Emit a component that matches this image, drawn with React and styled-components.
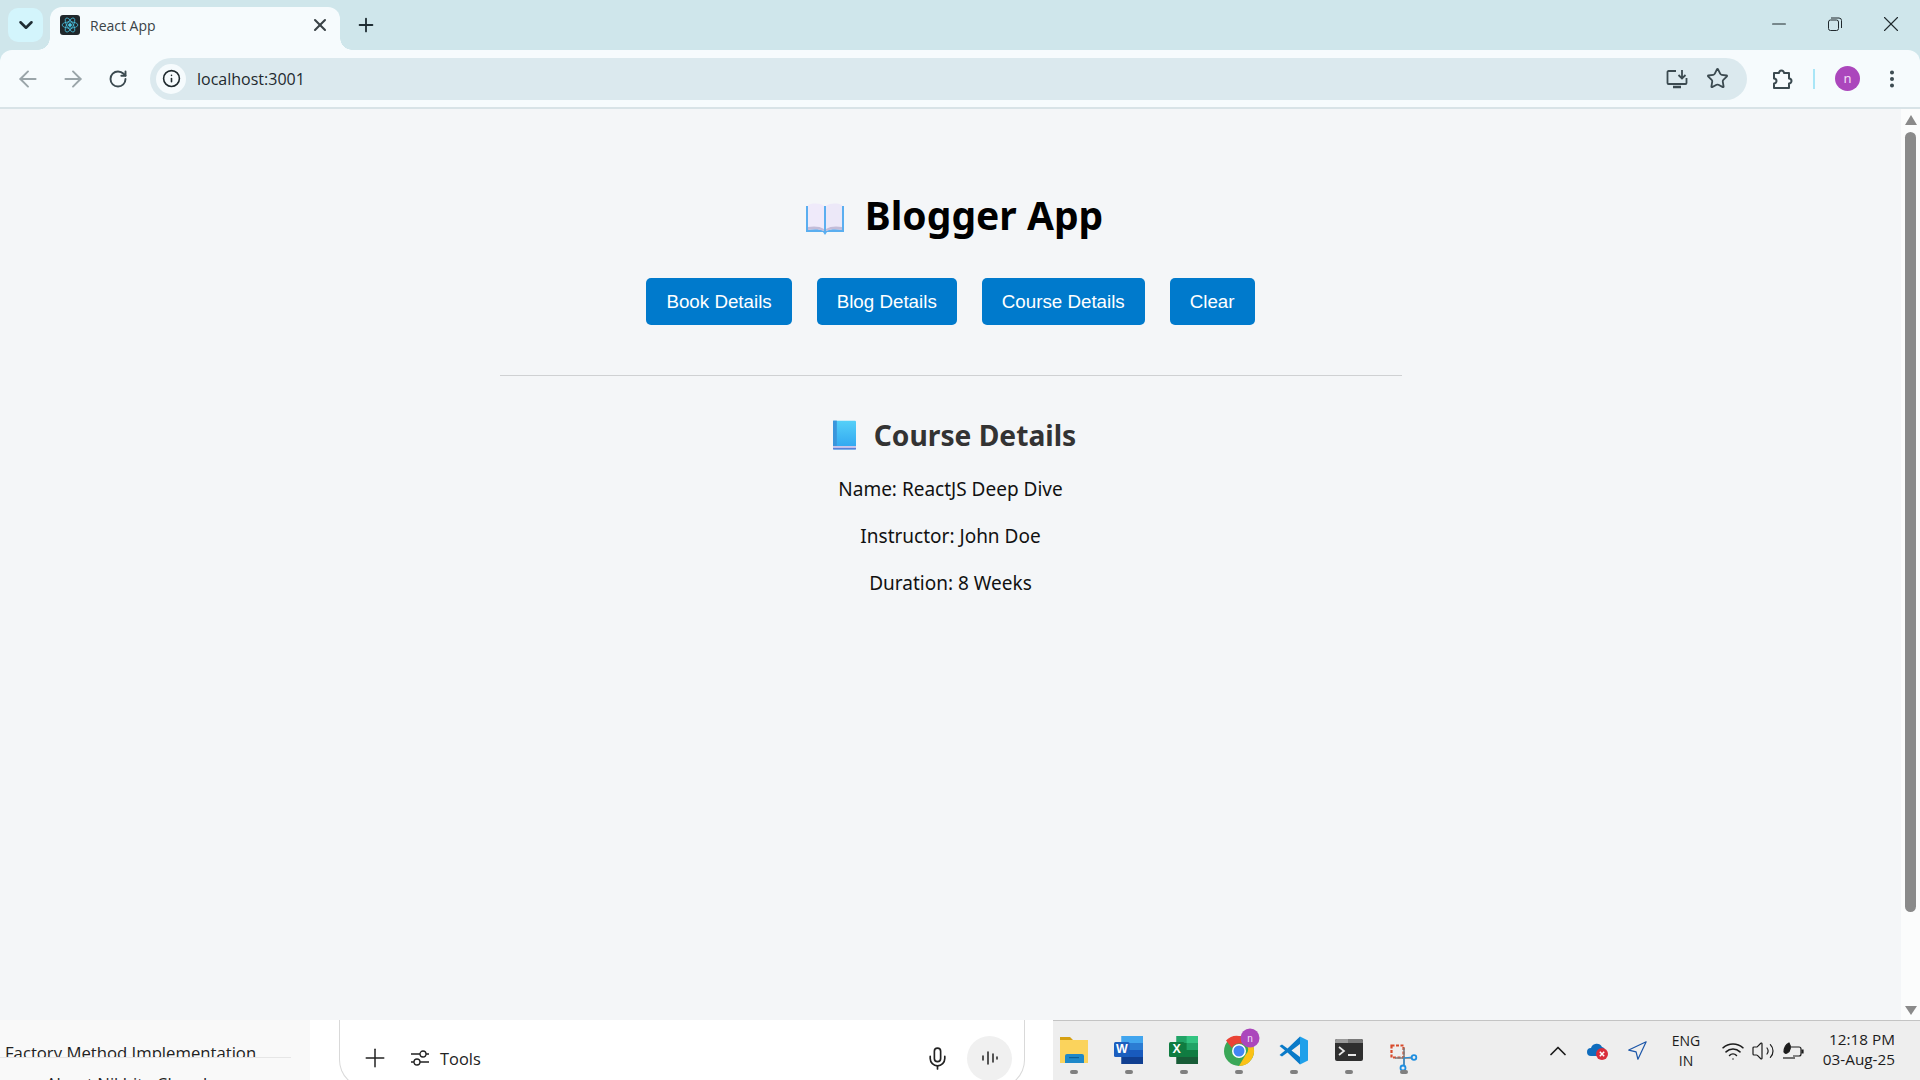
import React from "react";
import styled, { createGlobalStyle } from "styled-components";
import { ChevronDown, X, Plus, ArrowLeft, ArrowRight, RotateCw, Info, Star, EllipsisVertical, Minus, Mic, ChevronUp, Navigation, Wifi, Volume2 } from "lucide-react";

const GlobalStyle = createGlobalStyle`
  html, body { margin: 0; padding: 0; background: #f4f6f8; }
  body { font-family: "Noto Sans", "Open Sans", sans-serif; overflow: hidden; }
  * { box-sizing: border-box; }
`;

const Screen = styled.div`
  width: 1920px;
  height: 1080px;
  display: flex;
  flex-direction: column;
  overflow: hidden;
  background: #cfe6eb;
`;

const TabStrip = styled.div`
  height: 50px;
  flex: none;
  display: flex;
  align-items: flex-start;
  color: #1f2d33;
`;

const TabMenu = styled.div`
  width: 35px;
  height: 34px;
  margin: 8px 0 0 8px;
  border-radius: 10px;
  background: #d3f5fc;
  display: flex;
  align-items: center;
  justify-content: center;
`;

const Tab = styled.div`
  position: relative;
  width: 290px;
  height: 43px;
  margin: 7px 0 0 7px;
  border-radius: 12px 12px 0 0;
  background: #f6fbfd;
  display: flex;
  align-items: center;
  padding: 0 10px 7px 10px;
  font-size: 14px;
  color: #3a4347;
  font-family: "Open Sans", sans-serif;

  &::before,
  &::after {
    content: "";
    position: absolute;
    bottom: 0;
    width: 12px;
    height: 12px;
  }
  &::before {
    left: -12px;
    background: radial-gradient(circle at 0 0, transparent 11.5px, #f6fbfd 12px);
  }
  &::after {
    right: -12px;
    background: radial-gradient(circle at 100% 0, transparent 11.5px, #f6fbfd 12px);
  }
`;

const Favicon = styled.div`
  width: 20px;
  height: 20px;
  border-radius: 3px;
  background: #20272b;
  display: flex;
  align-items: center;
  justify-content: center;
  margin-right: 10px;
`;

const TabTitle = styled.span`
  flex: 1;
`;

const NewTab = styled.div`
  width: 28px;
  height: 28px;
  margin: 11px 0 0 12px;
  display: flex;
  align-items: center;
  justify-content: center;
`;

const WindowControls = styled.div`
  margin-left: auto;
  margin-right: 1px;
  display: flex;
  height: 48px;
  align-items: center;
`;

const WindowButton = styled.div`
  width: 56px;
  height: 48px;
  display: flex;
  align-items: center;
  justify-content: center;
  color: #20292d;
`;

const Toolbar = styled.div`
  height: 59px;
  flex: none;
  background: #f6fbfd;
  border-bottom: 2px solid #d8e3e7;
  border-radius: 12px 12px 0 0;
  display: flex;
  align-items: center;
  padding-left: 10px;
  color: #3b4a50;
`;

const NavButton = styled.div`
  width: 36px;
  height: 36px;
  margin-right: ${(p) => p.$gap ?? 9}px;
  display: flex;
  align-items: center;
  justify-content: center;
  color: ${(p) => (p.$dim ? "#9aa5a9" : "#3b4a50")};
`;

const Omnibox = styled.div`
  width: 1597px;
  height: 42px;
  margin-left: 13px;
  border-radius: 21px;
  background: #dbe9ee;
  display: flex;
  align-items: center;
  padding: 0 10px 0 6px;
`;

const SiteInfo = styled.div`
  width: 30px;
  height: 30px;
  border-radius: 50%;
  background: #f6fbfd;
  color: #1f2a2e;
  display: flex;
  align-items: center;
  justify-content: center;
  margin-right: 11px;
`;

const Url = styled.span`
  flex: 1;
  font-family: "Open Sans", sans-serif;
  font-size: 16px;
  color: #1f2a2e;
`;

const OmniIcon = styled.div`
  width: 40px;
  display: flex;
  justify-content: center;
  color: #3b4a50;
`;

const ToolbarEnd = styled.div`
  display: flex;
  align-items: center;
  margin-left: 24px;
`;

const Separator = styled.div`
  width: 2px;
  height: 20px;
  background: #a9e6f7;
  margin: 0 20px 0 20px;
`;

const Avatar = styled.div`
  width: 25px;
  height: 25px;
  border-radius: 50%;
  background: #ab47bc;
  color: #f3dff6;
  font-size: 13px;
  display: flex;
  align-items: center;
  justify-content: center;
  padding-bottom: 2px;
  margin-right: 14px;
`;

const Viewport = styled.div`
  flex: 1;
  display: flex;
  min-height: 0;
`;

const Page = styled.main`
  flex: 1;
  background: #f4f6f8;
  display: flex;
  flex-direction: column;
  align-items: center;
  padding-top: 80px;
`;

const AppTitle = styled.h1`
  margin: 0 0 39px;
  height: 50px;
  display: flex;
  align-items: center;
  gap: 17px;
  font-size: 39px;
  font-weight: 700;
  color: #000;

  svg {
    margin-top: 8px;
  }
`;

const ButtonRow = styled.div`
  display: flex;
  gap: 25px;
  margin-bottom: 50px;
`;

const ActionButton = styled.button`
  height: 47px;
  padding: 0 20px;
  border: none;
  border-radius: 5px;
  background: #007acc;
  color: #fff;
  font-family: "Liberation Sans", Arial, sans-serif;
  font-size: 18.75px;
`;

const Divider = styled.hr`
  width: 902px;
  margin: 0 0 37px;
  border: none;
  border-top: 1px solid #cfd1d3;
`;

const SectionTitle = styled.h2`
  margin: 0 0 19px;
  padding-left: 8px;
  height: 44px;
  display: flex;
  align-items: center;
  gap: 18px;
  font-size: 28.2px;
  font-weight: 700;
  color: #333;
`;

const DetailLine = styled.p`
  margin: 0 0 20px;
  height: 27px;
  line-height: 27px;
  font-size: 19px;
  color: #111;
`;

const ScrollTrack = styled.div`
  width: 19px;
  flex: none;
  background: #fbfcfc;
  display: flex;
  flex-direction: column;
  align-items: center;
  padding: 6px 0 5px;
`;

const ScrollArrow = styled.div`
  width: 0;
  height: 0;
  border-left: 6.5px solid transparent;
  border-right: 6.5px solid transparent;
  ${(p) => (p.$down ? "border-top: 9px solid #8a8a8a; margin-top: auto;" : "border-bottom: 10px solid #8a8a8a;")}
`;

const ScrollThumb = styled.div`
  width: 11px;
  height: 780px;
  margin-top: 7px;
  border-radius: 6px;
  background: #8a8a8a;
`;

const BottomBar = styled.div`
  height: 60px;
  flex: none;
  display: flex;
  overflow: hidden;
`;

const ChatList = styled.div`
  width: 310px;
  background: #f9f9f9;
  font-size: 16.7px;
  line-height: 24px;
  color: #222;
  font-family: "Open Sans", sans-serif;
`;

const ChatItem = styled.div`
  height: 38px;
  width: 291px;
  overflow: hidden;
  border-bottom: 1px solid #e6e6e6;
  padding: 21px 0 0 5px;
  white-space: nowrap;
`;

const ChatNext = styled.div`
  padding-left: 46px;
  margin-top: 14px;
  white-space: nowrap;
`;

const ChatMain = styled.div`
  width: 743px;
  background: #fff;
  padding-left: 29px;
`;

const Composer = styled.div`
  width: 686px;
  height: 68px;
  border: 1px solid #d9d9d9;
  border-top: none;
  border-radius: 0 0 28px 28px;
  padding-top: 15px;
  color: #222;
`;

const ComposerRow = styled.div`
  height: 46px;
  display: flex;
  align-items: center;
  padding: 0 12px 0 20px;
`;

const ToolsButton = styled.div`
  display: flex;
  align-items: center;
  gap: 11px;
  margin-left: 21px;
  font-family: "Open Sans", sans-serif;
  font-size: 16.4px;
`;

const ComposerEnd = styled.div`
  margin-left: auto;
  display: flex;
  align-items: center;
  gap: 17px;
`;

const VoiceButton = styled.div`
  width: 45px;
  height: 45px;
  border-radius: 50%;
  background: #f0f0f0;
  display: flex;
  align-items: center;
  justify-content: center;
`;

const Taskbar = styled.div`
  flex: 1;
  background: #eeeeee;
  border-top: 1px solid #c4c4c4;
  display: flex;
  align-items: flex-start;
`;

const TaskList = styled.div`
  display: flex;
  margin-left: -7px;
`;

const TaskItem = styled.div`
  width: 55px;
  height: 59px;
  position: relative;
  display: flex;
  justify-content: center;
  padding-top: ${(p) => p.$top}px;

  &::after {
    content: "";
    position: absolute;
    left: 24px;
    bottom: 6px;
    width: 8px;
    height: 4px;
    border-radius: 2px;
    background: #7f7f7f;
  }
`;

const Tray = styled.div`
  margin-left: auto;
  display: flex;
  align-items: center;
  height: 59px;
  color: #1c1c1c;
  font-family: "Open Sans", sans-serif;
`;

const TrayIcon = styled.div`
  width: ${(p) => p.$w || 30}px;
  display: flex;
  justify-content: center;
`;

const Lang = styled.div`
  width: 44px;
  margin: 0 10px 0 8px;
  text-align: center;
  font-size: 14px;
  line-height: 20px;
`;

const Clock = styled.div`
  width: 86px;
  margin: 0 25px 3px 1px;
  text-align: right;
  font-size: 15.3px;
  line-height: 20px;
  white-space: nowrap;
`;

const OpenBook = () => (
  <svg width="50" height="36" viewBox="-6 0 50 36">
    <path d="M2 6h38v26H23l-2 3-2-3H2z" fill="#5aaef0" />
    <path d="M4 5c5-2 12-2 16 1v25c-4-2-11-2-16-1z" fill="#efeafa" />
    <path d="M38 5c-5-2-12-2-16 1v25c4-2 11-2 16-1z" fill="#ece8f8" />
    <path d="M4 27c5-1 12-1 16 2v2c-4-2-11-2-16-1zM38 27c-5-1-12-1-16 2v2c4-2 11-2 16-1z" fill="#c3bcd8" />
  </svg>
);

const BlueBook = () => (
  <svg width="23" height="30" viewBox="0 0 24 30">
    <defs>
      <linearGradient id="bb" x1="0" y1="0" x2="0" y2="1">
        <stop offset="0" stopColor="#55d0f8" />
        <stop offset="1" stopColor="#2fa4f0" />
      </linearGradient>
    </defs>
    <rect width="24" height="30" rx="1" fill="url(#bb)" />
    <rect width="4" height="27" fill="#3a96dc" />
    <rect y="26.5" width="24" height="2" fill="#cfc6ea" />
    <rect y="28.5" width="24" height="1.5" fill="#5a7fd8" />
  </svg>
);

const ReactLogo = () => (
  <svg width="18" height="18" viewBox="-12 -12 24 24" fill="none" stroke="#49c6e5" strokeWidth="1">
    <circle r="2" fill="#49c6e5" />
    <ellipse rx="10.5" ry="4.2" />
    <ellipse rx="10.5" ry="4.2" transform="rotate(60)" />
    <ellipse rx="10.5" ry="4.2" transform="rotate(120)" />
  </svg>
);

const InstallIcon = () => (
  <svg width="22" height="20" viewBox="0 0 22 20" fill="none" stroke="currentColor" strokeWidth="1.8">
    <path d="M10 2H2.5A1 1 0 0 0 1.5 3v11a1 1 0 0 0 1 1h17a1 1 0 0 0 1-1V9" />
    <path d="M16 1v8M12.5 6l3.5 3.5L19.5 6" />
    <path d="M7 18h8" strokeWidth="2.5" />
  </svg>
);

const ExtensionIcon = () => (
  <svg width="22" height="22" viewBox="0 0 22 22" fill="none" stroke="currentColor" strokeWidth="2" strokeLinejoin="round">
    <path d="M3 5h5a2.5 2.5 0 0 1 5 0h5v5.5a2.5 2.5 0 0 1 0 5V20H3v-4.5a2.5 2.5 0 0 0 0-5z" />
  </svg>
);

const RestoreIcon = () => (
  <svg width="14" height="14" viewBox="0 0 14 14" fill="none" stroke="currentColor" strokeWidth="1">
    <rect x="0.5" y="3" width="10" height="10.5" rx="2" />
    <path d="M3 1h8a2.5 2.5 0 0 1 2.5 2.5V11" />
  </svg>
);

const SlidersIcon = () => (
  <svg width="18" height="18" viewBox="0 0 18 18" fill="none" stroke="currentColor" strokeWidth="1.3">
    <path d="M0 5h9M15 5h3M0 13h3M9 13h9" />
    <circle cx="12" cy="5" r="3" />
    <circle cx="6" cy="13" r="3" />
  </svg>
);

const VoiceIcon = () => (
  <svg width="18" height="18" viewBox="0 0 18 18" stroke="#222" strokeWidth="1.5" strokeLinecap="round">
    <path d="M2 7v4M7 3v12M12 5v8M16 8v2" />
  </svg>
);

const FolderIcon = () => (
  <svg width="30" height="28" viewBox="0 0 30 28">
    <path d="M1 1h10l3 3h-13z" fill="#d6a011" />
    <path d="M1 4h28v23H1z" fill="#fbd35c" />
    <path d="M6 20a2 2 0 0 1 2-2h15a2 2 0 0 1 2 2v7H6z" fill="#1e88c9" />
    <rect x="10" y="21" width="10" height="1.2" fill="#0d5f96" />
  </svg>
);

const WordIcon = () => (
  <svg width="29" height="28" viewBox="0 0 28 28" preserveAspectRatio="none">
    <rect x="7" width="21" height="7" fill="#41a5ee" />
    <rect x="7" y="7" width="21" height="7" fill="#2b7cd3" />
    <rect x="7" y="14" width="21" height="7" fill="#185abd" />
    <rect x="7" y="21" width="21" height="7" fill="#103f91" />
    <rect y="6" width="15" height="15" rx="1.5" fill="#1b5ebe" />
    <text x="7.5" y="17.5" textAnchor="middle" fontSize="12" fontWeight="700" fontFamily="Liberation Sans" fill="#fff">W</text>
  </svg>
);

const ExcelIcon = () => (
  <svg width="29" height="28" viewBox="0 0 28 28" preserveAspectRatio="none">
    <rect x="7" width="21" height="7" fill="#21a366" />
    <rect x="17" width="11" height="7" fill="#33c481" />
    <rect x="7" y="7" width="21" height="14" fill="#107c41" />
    <rect x="17" y="7" width="11" height="7" fill="#21a366" />
    <rect x="7" y="21" width="21" height="7" fill="#185c37" />
    <rect y="6" width="15" height="15" rx="1.5" fill="#107c41" />
    <text x="7.5" y="17.5" textAnchor="middle" fontSize="12" fontWeight="700" fontFamily="Liberation Sans" fill="#fff">X</text>
  </svg>
);

const ChromeIcon = () => (
  <svg width="44" height="38" viewBox="-6 0 44 38">
    <circle cx="16" cy="23" r="15" fill="#3aa757" />
    <path d="M16 8a15 15 0 0 1 13 7.5H16a7.5 7.5 0 0 0-7 4.5L3 12.5A15 15 0 0 1 16 8z" fill="#ea4335" />
    <path d="M29 15.5A15 15 0 0 1 16 38l6.5-11a7.5 7.5 0 0 0 0-11.5z" fill="#fbc116" />
    <circle cx="16" cy="23" r="7" fill="#fff" />
    <circle cx="16" cy="23" r="5.5" fill="#4285f4" />
    <circle cx="27" cy="10" r="9.5" fill="#ab47bc" />
    <text x="27" y="13.5" textAnchor="middle" fontSize="10" fontFamily="Liberation Sans" fill="#f3dff6">n</text>
  </svg>
);

const VsCodeIcon = () => (
  <svg width="30" height="31" viewBox="0 0 30 30">
    <path d="M21 1l8 4v20l-8 4z" fill="#1fa0ea" />
    <path d="M21 1L8.5 13 3 9 .5 10.5 6 15 .5 19.5 3 21l5.500-4L21 29v-7.500L12.500 15 21 8.500z" fill="#0a7ac8" />
  </svg>
);

const TerminalIcon = () => (
  <svg width="30" height="22" viewBox="0 0 28 22">
    <rect width="28" height="22" rx="2" fill="#2f2f2f" />
    <path d="M2 0h11v4H0V2a2 2 0 0 1 2-2z" fill="#9a9a9a" />
    <path d="M13 0h13a2 2 0 0 1 2 2v2H13z" fill="#787878" />
    <path d="M4 8l5 4-5 4" fill="none" stroke="#e8e8e8" strokeWidth="1.7" />
    <path d="M13 16h8" stroke="#e8e8e8" strokeWidth="2" />
  </svg>
);

const SnipIcon = () => (
  <svg width="28" height="28" viewBox="0 0 28 28" fill="none">
    <rect x="1.5" y="1.5" width="12" height="12" stroke="#d84a2b" strokeWidth="2.2" strokeDasharray="3 1.5" />
    <path d="M14 4v18M5 14h16" stroke="#7d7d7d" strokeWidth="1.6" />
    <path d="M14 14l8-1M14 14v7" stroke="#1f8fe0" strokeWidth="1.2" />
    <circle cx="24" cy="13.5" r="2.3" stroke="#1f8fe0" strokeWidth="1.8" />
    <circle cx="13" cy="24" r="2.5" stroke="#1f8fe0" strokeWidth="1.8" />
  </svg>
);

const CloudError = () => (
  <svg width="22" height="20" viewBox="0 0 22 20">
    <path d="M4 15a4 4 0 0 1 0-8 6 6 0 0 1 11-1 4 4 0 0 1 3 4l-3 5z" fill="#0f6cbd" />
    <circle cx="15" cy="13" r="6" fill="#d92d3a" />
    <path d="M12.8 10.8l4.4 4.4M17.2 10.8l-4.4 4.4" stroke="#fff" strokeWidth="1.5" />
  </svg>
);

const BatteryLeaf = () => (
  <svg width="22" height="18" viewBox="0 0 22 18" fill="none" stroke="#1c1c1c" strokeWidth="1.2">
    <path d="M9 5h8a2 2 0 0 1 2 2v5a2 2 0 0 1-2 2H11" />
    <path d="M19.5 8h1.500v3h-1.500" fill="#1c1c1c" />
    <path d="M2 10c0-5 3-8 5-9 2 3 2 8-2 10-1 .5-2 .5-3-1z" fill="#1c1c1c" />
    <path d="M1 16h12" />
  </svg>
);

const taskIcons = [
  { Icon: FolderIcon, top: 15 },
  { Icon: WordIcon, top: 15 },
  { Icon: ExcelIcon, top: 15 },
  { Icon: ChromeIcon, top: 7 },
  { Icon: VsCodeIcon, top: 14 },
  { Icon: TerminalIcon, top: 18 },
  { Icon: SnipIcon, top: 23 },
];

const App = () => {
  const actions = ["Book Details", "Blog Details", "Course Details", "Clear"];
  const details = ["Name: ReactJS Deep Dive", "Instructor: John Doe", "Duration: 8 Weeks"];

  return (
    <Screen>
      <GlobalStyle />
      <TabStrip>
        <TabMenu>
          <ChevronDown size={22} strokeWidth={2.8} />
        </TabMenu>
        <Tab>
          <Favicon>
            <ReactLogo />
          </Favicon>
          <TabTitle>React App</TabTitle>
          <X size={20} strokeWidth={2.5} />
        </Tab>
        <NewTab>
          <Plus size={22} strokeWidth={2} />
        </NewTab>
        <WindowControls>
          <WindowButton>
            <Minus size={22} strokeWidth={1.1} />
          </WindowButton>
          <WindowButton>
            <RestoreIcon />
          </WindowButton>
          <WindowButton>
            <X size={26} strokeWidth={1} />
          </WindowButton>
        </WindowControls>
      </TabStrip>
      <Toolbar>
        <NavButton $dim>
          <ArrowLeft size={26} strokeWidth={1.8} />
        </NavButton>
        <NavButton $dim>
          <ArrowRight size={26} strokeWidth={1.8} />
        </NavButton>
        <NavButton $gap={1}>
          <RotateCw size={20} strokeWidth={2.3} />
        </NavButton>
        <Omnibox>
          <SiteInfo>
            <Info size={19} strokeWidth={2} />
          </SiteInfo>
          <Url>localhost:3001</Url>
          <OmniIcon>
            <InstallIcon />
          </OmniIcon>
          <OmniIcon>
            <Star size={23} strokeWidth={1.9} />
          </OmniIcon>
        </Omnibox>
        <ToolbarEnd>
          <ExtensionIcon />
          <Separator />
          <Avatar>n</Avatar>
          <NavButton $gap={0}>
            <EllipsisVertical size={22} strokeWidth={2.4} />
          </NavButton>
        </ToolbarEnd>
      </Toolbar>
      <Viewport>
        <Page>
          <AppTitle>
            <OpenBook />
            Blogger App
          </AppTitle>
          <ButtonRow>
            {actions.map((label) => (
              <ActionButton key={label}>{label}</ActionButton>
            ))}
          </ButtonRow>
          <Divider />
          <SectionTitle>
            <BlueBook />
            Course Details
          </SectionTitle>
          {details.map((line) => (
            <DetailLine key={line}>{line}</DetailLine>
          ))}
        </Page>
        <ScrollTrack>
          <ScrollArrow />
          <ScrollThumb />
          <ScrollArrow $down />
        </ScrollTrack>
      </Viewport>
      <BottomBar>
        <ChatList>
          <ChatItem>Factory Method Implementation</ChatItem>
          <ChatNext>About Nikhita Chandra</ChatNext>
        </ChatList>
        <ChatMain>
          <Composer>
            <ComposerRow>
              <Plus size={30} strokeWidth={1.2} />
              <ToolsButton>
                <SlidersIcon />
                Tools
              </ToolsButton>
              <ComposerEnd>
                <Mic size={25} strokeWidth={1.6} />
                <VoiceButton>
                  <VoiceIcon />
                </VoiceButton>
              </ComposerEnd>
            </ComposerRow>
          </Composer>
        </ChatMain>
        <Taskbar>
          <TaskList>
            {taskIcons.map(({ Icon, top }, i) => (
              <TaskItem key={i} $top={top}>
                <Icon />
              </TaskItem>
            ))}
          </TaskList>
          <Tray>
            <TrayIcon $w={40}>
              <ChevronUp size={28} strokeWidth={1.5} />
            </TrayIcon>
            <TrayIcon $w={40}>
              <CloudError />
            </TrayIcon>
            <TrayIcon $w={38}>
              <Navigation size={22} strokeWidth={1.3} color="#1a55a8" />
            </TrayIcon>
            <Lang>
              ENG
              <br />
              IN
            </Lang>
            <TrayIcon>
              <Wifi size={24} strokeWidth={1.5} />
            </TrayIcon>
            <TrayIcon>
              <Volume2 size={24} strokeWidth={1.2} />
            </TrayIcon>
            <TrayIcon>
              <BatteryLeaf />
            </TrayIcon>
            <Clock>
              12:18 PM
              <br />
              03-Aug-25
            </Clock>
          </Tray>
        </Taskbar>
      </BottomBar>
    </Screen>
  );
};

export default App;
